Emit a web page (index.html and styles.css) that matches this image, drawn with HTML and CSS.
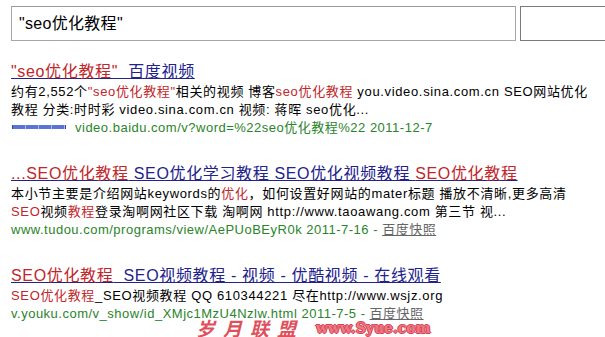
FILE: index.html
```html
<!DOCTYPE html>
<html lang="zh-CN">
<head>
    <meta charset="UTF-8">
    <title>"seo优化教程" 百度搜索</title>
    <link rel="stylesheet" href="styles.css">
</head>
<body>

    <div class="search-bar">
        <div class="search-input">"seo优化教程"</div>
        <div class="search-btn"></div>
    </div>

    <div class="results">
        <div class="result">
            <a class="title" href="#"><em>"seo优化教程"</em>&nbsp; 百度视频</a>
            <div class="abs">约有2,552个<em>"seo优化教程"</em>相关的视频 博客<em>seo优化教程</em> you.video.sina.com.cn SEO网站优化<br>教程 分类:时时彩 video.sina.com.cn 视频: 蒋晖 seo优化...</div>
            <div class="url"><span class="bar"></span>video.baidu.com/v?word=%22seo优化教程%22 2011-12-7</div>
        </div>

        <div class="result">
            <a class="title" href="#"><em>...SEO优化教程</em> SEO优化学习教程 SEO优化视频教程 <em>SEO优化教程</em></a>
            <div class="abs">本小节主要是介绍网站keywords的<em>优化</em>，如何设置好网站的mater标题 播放不清晰,更多高清<br><em>SEO</em>视频<em>教程</em>登录淘啊网社区下载 淘啊网 http://www.taoawang.com 第三节 视...</div>
            <div class="url">www.tudou.com/programs/view/AePUoBEyR0k 2011-7-16 - <a class="cache" href="#">百度快照</a></div>
        </div>

        <div class="result">
            <a class="title" href="#"><em>SEO优化教程</em>&nbsp; SEO视频教程 - 视频 - 优酷视频 - 在线观看</a>
            <div class="abs"><em>SEO优化教程</em>_SEO视频教程 QQ 610344221 尽在http://www.wsjz.org</div>
            <div class="url">v.youku.com/v_show/id_XMjc1MzU4Nzlw.html 2011-7-5 - <a class="cache" href="#">百度快照</a></div>
        </div>
    </div>

    <!-- watermark over the last result -->
    <div class="watermark">
        <span class="wm-cn">岁月联盟</span>
        <span class="wm-en">www.Syue.com</span>
    </div>

</body>
</html>
```

FILE: styles.css
```css
body {
    margin: 0;
    padding: 6px 0 0 11px;
    font-family: Arial, "Liberation Sans", "Noto Sans CJK SC", sans-serif;
    font-size: 13px;
    letter-spacing: 0.5px;
    color: #000;
    background: #fff;
    position: relative;
    height: 331px;
    overflow: hidden;
}

.search-bar {
    display: flex;
    gap: 4px;
}

.search-input {
    width: 496px;
    height: 33px;
    border: 1px solid #a7a7a7;
    border-top-color: #9a9a9a;
    font-size: 16px;
    line-height: 33px;
    padding-left: 7px;
    letter-spacing: 0.3px;
}

.search-btn {
    flex: 1;
    height: 33px;
    border: 1px solid #7b7b7b;
    border-right: none;
}

.results {
    margin-top: 21px;
}

.result {
    margin-bottom: 27px;
}

.title {
    display: inline-block;
    font-size: 16px;
    line-height: 20px;
    letter-spacing: 0.65px;
    color: #22228c;
    text-decoration: underline;
    margin-bottom: 1px;
}

em {
    font-style: normal;
    color: #c0262a;
}

.abs {
    line-height: 18px;
    letter-spacing: 0.65px;
    white-space: nowrap;
}

.url {
    line-height: 18px;
    color: #2a842a;
    white-space: nowrap;
}

.bar {
    display: inline-block;
    width: 52px;
    height: 4px;
    margin: 0 9px 3px 1px;
    vertical-align: middle;
    background: repeating-linear-gradient(90deg, #5a74d4 0 12px, #a8b8ee 12px 13px);
    border-left: 1px solid #3046a8;
    border-right: 1px solid #3046a8;
}

.cache {
    color: #666;
    text-decoration: underline;
}

.watermark {
    position: absolute;
    left: 196px;
    top: 316px;
    display: flex;
    align-items: center;
    gap: 12px;
    pointer-events: none;
}

.wm-cn {
    font-family: "Noto Sans CJK SC", sans-serif;
    font-weight: bold;
    font-size: 19px;
    line-height: 24px;
    letter-spacing: 8px;
    color: #e0505c;
    font-style: italic;
    text-shadow: 0 0 1px #fff;
}

.wm-en {
    font-family: "DejaVu Serif", serif;
    font-weight: bold;
    font-size: 14px;
    line-height: 20px;
    letter-spacing: 0;
    color: #ec7a86;
    text-shadow: 1px 0 #d8404e, -1px 0 #d8404e, 0 1px #d8404e, 0 -1px #d8404e;
}
```
